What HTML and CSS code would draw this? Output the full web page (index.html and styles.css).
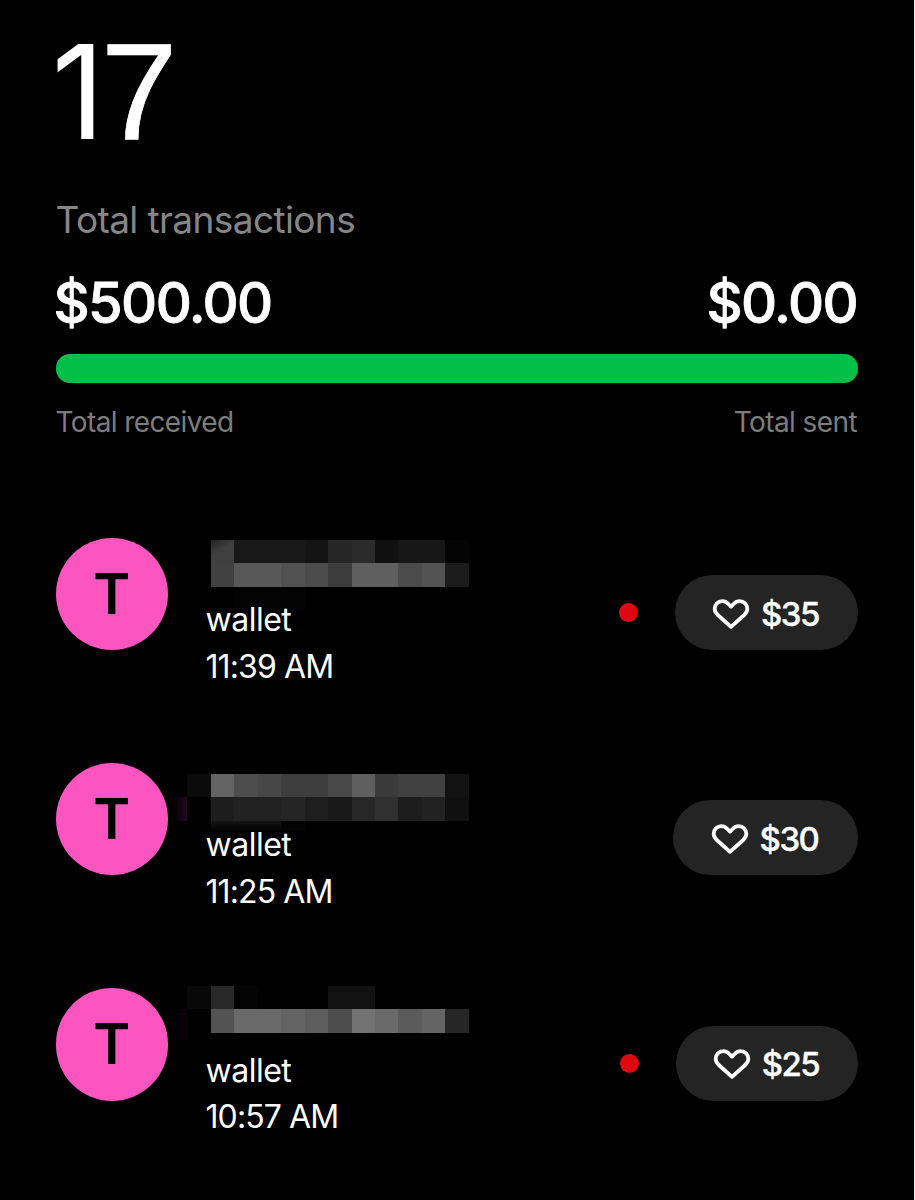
FILE: index.html
```
<!DOCTYPE html>
<html lang="en">
<head>
	<meta charset="UTF-8">
	<title>Transactions</title>
	<link rel="stylesheet" href="styles.css">
</head>
<body>
	<div class="wrapper">
		<div class="count"><span>1</span><span class="seven">7</span></div>
		<div class="count-label"><span>Total transactions</span></div>
		<div class="totals">
			<span>$500.00</span>
			<span class="sent">$0.00</span>
		</div>
		<div class="bar"></div>
		<div class="labels">
			<span>Total received</span>
			<span>Total sent</span>
		</div>

		<div class="list">
			<div class="row">
				<div class="avatar"><span>T</span></div>
				<div class="info">
					<!-- hidden name -->
					<svg class="mosaic mosaic-1" viewBox="-2 0 13 3" shape-rendering="crispEdges">
						<defs>
							<linearGradient id="fade1" x1="0" y1="0" x2=".6" y2="1"><stop offset="0" stop-color="#202020"/><stop offset=".5" stop-color="#404040"/></linearGradient>
						</defs>
						<rect x="0" y="0" width="1" height="1" fill="url(#fade1)"/>
						<rect x="1" y="0" width="3" height="1" fill="#181818"/>
						<rect x="4" y="0" width="1" height="1" fill="#141414"/>
						<rect x="5" y="0" width="1" height="1" fill="#262626"/>
						<rect x="6" y="0" width="1" height="1" fill="#2b2b2b"/>
						<rect x="7" y="0" width="1" height="1" fill="#101010"/>
						<rect x="8" y="0" width="2" height="1" fill="#171717"/>
						<rect x="10" y="0" width="1" height="1" fill="#040404"/>
						<rect x="0" y="1" width="1" height="1" fill="#414141"/>
						<rect x="1" y="1" width="2" height="1" fill="#585858"/>
						<rect x="3" y="1" width="1" height="1" fill="#515151"/>
						<rect x="4" y="1" width="1" height="1" fill="#4c4c4c"/>
						<rect x="5" y="1" width="1" height="1" fill="#3d3d3d"/>
						<rect x="6" y="1" width="2" height="1" fill="#5f5f5f"/>
						<rect x="8" y="1" width="1" height="1" fill="#4b4b4b"/>
						<rect x="9" y="1" width="1" height="1" fill="#535353"/>
						<rect x="10" y="1" width="1" height="1" fill="#1c1c1c"/>
						<rect x="1" y="2" width="3" height="1" fill="#030303"/>
					</svg>
					<div class="text wallet">wallet</div>
					<div class="text time">11:39 AM</div>
				</div>
				<div class="dot"></div>
				<div class="pill p35">
					<svg class="heart" viewBox="0 0 38 32"><path d="M19 28.8 5.8 17C3.6 15 2.7 13.1 2.7 10.8 2.7 6.4 6 3.2 10.2 3.2c2.4 0 4.5 1 6.2 2.8L19 8.6l2.6-2.6c1.7-1.8 3.8-2.8 6.2-2.8 4.2 0 7.5 3.2 7.5 7.6 0 2.3-.9 4.2-3.1 6.2Z"/></svg>
					<span>$35</span>
				</div>
			</div>

			<div class="row">
				<div class="avatar"><span>T</span></div>
				<div class="info">
					<svg class="mosaic mosaic-2" viewBox="-2 0 13 3" shape-rendering="crispEdges">
						<defs>
							<linearGradient id="pink2"><stop offset=".3" stop-color="#1c0618" stop-opacity="0"/><stop offset="1" stop-color="#250a20"/></linearGradient>
							<linearGradient id="fade2" x1="0" y1="0" x2="0" y2="1"><stop offset="0" stop-color="#151515"/><stop offset="1" stop-color="#000"/></linearGradient>
						</defs>
						<rect x="-1" y="0" width="1" height="1" fill="#0b0b0b"/>
						<rect x="0" y="0" width="1" height="1" fill="#636363"/>
						<rect x="1" y="0" width="1" height="1" fill="#4d4d4d"/>
						<rect x="2" y="0" width="1" height="1" fill="#474747"/>
						<rect x="3" y="0" width="2" height="1" fill="#3e3e3e"/>
						<rect x="5" y="0" width="1" height="1" fill="#484848"/>
						<rect x="6" y="0" width="1" height="1" fill="#5f5f5f"/>
						<rect x="7" y="0" width="1" height="1" fill="#3a3a3a"/>
						<rect x="8" y="0" width="2" height="1" fill="#414141"/>
						<rect x="10" y="0" width="1" height="1" fill="#121212"/>
						<rect x="-2" y="1" width="1" height="1" fill="url(#pink2)"/>
						<rect x="0" y="1" width="1" height="1" fill="#1d1d1d"/>
						<rect x="1" y="1" width="2" height="1" fill="#222"/>
						<rect x="3" y="1" width="1" height="1" fill="#252525"/>
						<rect x="4" y="1" width="1" height="1" fill="#1e1e1e"/>
						<rect x="5" y="1" width="1" height="1" fill="#191919"/>
						<rect x="6" y="1" width="1" height="1" fill="#272727"/>
						<rect x="7" y="1" width="1" height="1" fill="#303030"/>
						<rect x="8" y="1" width="1" height="1" fill="#1d1d1d"/>
						<rect x="9" y="1" width="1" height="1" fill="#222"/>
						<rect x="10" y="1" width="1" height="1" fill="#101010"/>
						<rect x="0" y="2" width="3" height=".45" fill="url(#fade2)"/>
						<rect x="3" y="2" width="1" height=".45" fill="#030303"/>
					</svg>
					<div class="text wallet">wallet</div>
					<div class="text time">11:25 AM</div>
				</div>
				<div class="pill p30">
					<svg class="heart" viewBox="0 0 38 32"><path d="M19 28.8 5.8 17C3.6 15 2.7 13.1 2.7 10.8 2.7 6.4 6 3.2 10.2 3.2c2.4 0 4.5 1 6.2 2.8L19 8.6l2.6-2.6c1.7-1.8 3.8-2.8 6.2-2.8 4.2 0 7.5 3.2 7.5 7.6 0 2.3-.9 4.2-3.1 6.2Z"/></svg>
					<span>$30</span>
				</div>
			</div>

			<div class="row">
				<div class="avatar"><span>T</span></div>
				<div class="info">
					<svg class="mosaic mosaic-3" viewBox="-2 0 13 3" shape-rendering="crispEdges">
						<defs>
							<linearGradient id="pink3"><stop offset=".3" stop-color="#0d030b" stop-opacity="0"/><stop offset="1" stop-color="#0d030b"/></linearGradient>
						</defs>
						<rect x="-1" y="0" width="1" height="1" fill="#080808"/>
						<rect x="0" y="0" width="1" height="1" fill="#292929"/>
						<rect x="1" y="0" width="1" height="1" fill="#040404"/>
						<rect x="5" y="0" width="2" height="1" fill="#121212"/>
						<rect x="-2" y="1" width="1" height="1.3" fill="url(#pink3)"/>
						<rect x="0" y="1" width="1" height="1" fill="#535353"/>
						<rect x="1" y="1" width="2" height="1" fill="#696969"/>
						<rect x="3" y="1" width="1" height="1" fill="#636363"/>
						<rect x="4" y="1" width="1" height="1" fill="#5d5d5d"/>
						<rect x="5" y="1" width="1" height="1" fill="#4d4d4d"/>
						<rect x="6" y="1" width="1" height="1" fill="#727272"/>
						<rect x="7" y="1" width="1" height="1" fill="#696969"/>
						<rect x="8" y="1" width="1" height="1" fill="#5b5b5b"/>
						<rect x="9" y="1" width="1" height="1" fill="#646464"/>
						<rect x="10" y="1" width="1" height="1" fill="#262626"/>
					</svg>
					<div class="text wallet">wallet</div>
					<div class="text time">10:57 AM</div>
				</div>
				<div class="dot"></div>
				<div class="pill p25">
					<svg class="heart" viewBox="0 0 38 32"><path d="M19 28.8 5.8 17C3.6 15 2.7 13.1 2.7 10.8 2.7 6.4 6 3.2 10.2 3.2c2.4 0 4.5 1 6.2 2.8L19 8.6l2.6-2.6c1.7-1.8 3.8-2.8 6.2-2.8 4.2 0 7.5 3.2 7.5 7.6 0 2.3-.9 4.2-3.1 6.2Z"/></svg>
					<span>$25</span>
				</div>
			</div>
		</div>
	</div>
</body>
</html>
```
FILE: styles.css
```
* {
	box-sizing: border-box;
}
body {
	margin: 0;
	background: #000;
	color: #fff;
	font-family: Inter, "Liberation Sans", sans-serif;
	overflow: hidden;
}
.wrapper {
	height: 1200px;
	padding: 26px 56px 0 55.5px;
	border-right: 1px solid #e4e4e4;
}
.count {
	height: 130px;
	line-height: 132px;
	font-size: 131px;
	letter-spacing: -8px;
	margin-left: -4px;
}
.seven {
	font-family: "Liberation Sans", sans-serif;
	font-size: 138px;
	line-height: 1px;
	margin-left: 4px;
	-webkit-text-stroke: 0.7px #fff;
}
.count-label {
	margin-top: 40px;
	height: 48px;
	line-height: 48px;
	font-size: 37px;
	color: #868686;
	letter-spacing: -0.6px;
}
.totals {
	display: flex;
	justify-content: space-between;
	margin-top: 26px;
	height: 64px;
	line-height: 66px;
	font-size: 56px;
	font-weight: 500;
	letter-spacing: -1.6px;
	margin-left: -2px;
	-webkit-text-stroke: 0.8px #fff;
}
.bar {
	margin-top: 20px;
	height: 28.5px;
	border-radius: 14px;
	background: #04bf47;
}
.labels {
	display: flex;
	justify-content: space-between;
	margin-top: 19.5px;
	padding-right: 1px;
	height: 40px;
	line-height: 40px;
	font-size: 28px;
	letter-spacing: -0.6px;
	color: #7d7d7d;
}
.sent {
	margin-right: 1px;
}
.list {
	display: flex;
	flex-direction: column;
	gap: 75.3px;
	margin-top: 95.5px;
}
.row {
	display: flex;
	align-items: center;
	height: 150px;
}
.avatar {
	display: flex;
	align-items: center;
	justify-content: center;
	align-self: flex-start;
	width: 112.5px;
	height: 112.5px;
	border-radius: 50%;
	background: #fc55c0;
	color: #000;
	font-size: 56px;
	font-weight: 600;
}
.info {
	display: flex;
	flex-direction: column;
	justify-content: flex-end;
	flex: 1;
	height: 153.2px;
	align-self: flex-start;
	padding-left: 37.5px;
}
.mosaic {
	flex: none;
	width: 304.85px;
	height: 70.35px;
	margin-left: -41.5px;
}
.mosaic-1 {
	margin-bottom: -13.65px;
}
.mosaic-2 {
	margin-bottom: -22.45px;
}
.mosaic-3 {
	margin-bottom: -8.6px;
}
.text {
	position: relative;
	height: 46.8px;
	line-height: 46.8px;
	font-size: 32px;
}
.wallet {
	letter-spacing: -0.5px;
}
.time {
	letter-spacing: -0.9px;
}
.dot {
	width: 19px;
	height: 19px;
	margin-right: 37.5px;
	border-radius: 50%;
	background: #df0710;
}
.pill {
	display: flex;
	align-items: center;
	justify-content: center;
	gap: 11px;
	height: 75px;
	padding-top: 2px;
	padding-right: 2px;
	border-radius: 38px;
	background: #242424;
	font-size: 33px;
	font-weight: 500;
	letter-spacing: -1.5px;
	-webkit-text-stroke: 0.4px #fff;
}
.p35 {
	width: 183px;
}
.p30 {
	width: 185px;
}
.p25 {
	width: 182px;
}
.heart {
	width: 38px;
	height: 32px;
	fill: none;
	stroke: #fff;
	stroke-width: 3.8;
	stroke-linejoin: round;
}
```
